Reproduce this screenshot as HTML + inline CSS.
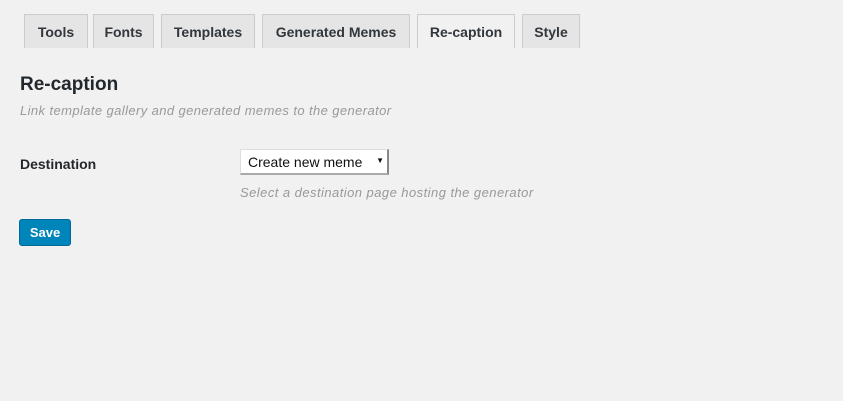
<!DOCTYPE html>
<html><head><style>
body{margin:0;width:843px;height:401px;background:#f1f1f1;font-family:"Liberation Sans",sans-serif;color:#23282d;position:relative;overflow:hidden}
.tab{position:absolute;top:14px;height:34px;box-sizing:border-box;border:1px solid #ccc;border-bottom:none;background:#e5e5e5;font-weight:bold;font-size:14px;line-height:35px;text-align:center;color:#32373c}
.tab.a{background:#f1f1f1}
.abs{position:absolute}
</style></head><body>
<div class="tab" style="left:24px;width:64px">Tools</div>
<div class="tab" style="left:93px;width:61px">Fonts</div>
<div class="tab" style="left:161px;width:94px">Templates</div>
<div class="tab" style="left:262px;width:148px">Generated Memes</div>
<div class="tab a" style="left:417px;width:98px">Re-caption</div>
<div class="tab" style="left:522px;width:58px">Style</div>
<div class="abs" style="left:20px;top:74px;font-size:19px;font-weight:bold;color:#23282d">Re-caption</div>
<div class="abs" style="left:20px;top:103px;font-size:13px;font-style:italic;color:#999;letter-spacing:0.4px">Link template gallery and generated memes to the generator</div>
<div class="abs" style="left:20px;top:156px;font-size:14px;font-weight:bold">Destination</div>
<div class="abs" style="left:240px;top:149px;width:149px;height:26px;box-sizing:border-box;background:#fff;border:1px solid #ddd;border-right:2px solid #888;border-bottom:2px solid #aaa;font-size:14px;line-height:24px;padding-left:7px;color:#111">Create new meme<span style="position:absolute;right:3px;top:-1px;font-size:8px">&#9660;</span></div>
<div class="abs" style="left:240px;top:185px;font-size:13px;font-style:italic;color:#999;letter-spacing:0.45px">Select a destination page hosting the generator</div>
<div class="abs" style="left:19px;top:219px;width:52px;height:27px;box-sizing:border-box;background:#0085ba;border:1px solid #006799;border-radius:3px;color:#fff;font-size:13px;font-weight:bold;text-align:center;line-height:25px">Save</div>
</body></html>
